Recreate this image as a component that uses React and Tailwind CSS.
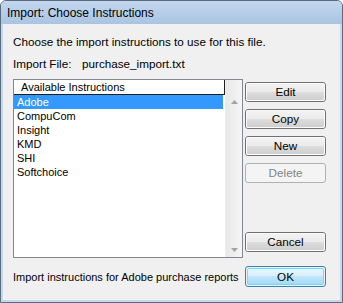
import React from 'react';

const items = ['Adobe', 'CompuCom', 'Insight', 'KMD', 'SHI', 'Softchoice'];

const Button = ({ children, disabled, primary, className = '' }) => {
  if (disabled) {
    return (
      <div className={`h-[20px] rounded-[3px] border border-[#adb2b5] bg-[#f4f4f4] flex items-center justify-center text-[#838383] ${className}`}>
        {children}
      </div>
    );
  }
  if (primary) {
    return (
      <div className={`h-[21px] rounded-[3px] border border-[#3c7fb1] p-px ${className}`}>
        <div className="h-full rounded-[2px] border border-[#6fdcf7] bg-[linear-gradient(#e5f4fc_0%,#d9f0fc_45%,#bee6fd_50%,#a7d9f5_100%)] flex items-center justify-center text-black">
          {children}
        </div>
      </div>
    );
  }
  return (
    <div className={`h-[20px] rounded-[3px] border border-[#707070] ${className}`}>
      <div className="h-full rounded-[2px] border border-[#fcfcfc] bg-[linear-gradient(#f2f2f2_0%,#ebebeb_50%,#dddddd_51%,#cfcfcf_100%)] flex items-center justify-center text-black">
        {children}
      </div>
    </div>
  );
};

export default function App() {
  return (
    <div className="w-[343px] h-[303px] bg-white font-['Liberation_Sans',Arial,sans-serif] text-[11.7px] leading-[14px] text-black">
      <div className="h-full flex flex-col rounded-t-[6px] border border-[#5b6b7d] bg-[#c4d8ee] overflow-hidden">
        {/* title bar */}
        <div className="h-[23px] flex items-center pl-[6px] bg-[linear-gradient(#c2d7ee,#a9c4e2)] text-[12px] text-black">
          Import: Choose Instructions
        </div>

        {/* client */}
        <div className="flex-1 mx-[2px] mb-[2px] bg-[#f0f0f0] pl-[10px] pr-[14px] pt-[11px] flex flex-col">
          <p>Choose the import instructions to use for this file.</p>
          <div className="flex mt-[8px]">
            <span className="w-[69px]">Import File:</span>
            <span>purchase_import.txt</span>
          </div>

          <div className="flex mt-[8px] gap-[2px]">
            {/* list box */}
            <div className="w-[230px] h-[179px] border border-[#828790] bg-white flex text-[11px]">
              <div className="flex-1 flex flex-col">
                <div className="h-[15px] flex border-b border-[#1e1e1e]">
                  <div className="w-[211px] border-r border-[#1e1e1e] pl-[7px] leading-[14px]">Available Instructions</div>
                  <div className="flex-1" />
                </div>
                <div className="flex flex-col pr-[2px]">
                  {items.map((it, i) => (
                    <div
                      key={it}
                      className={`h-[14px] pl-[3px] leading-[14px] ${i === 0 ? 'bg-[#3399ff] text-white' : ''}`}
                    >
                      {it}
                    </div>
                  ))}
                </div>
              </div>
              {/* scrollbar */}
              <div className="w-[17px] bg-[linear-gradient(90deg,#e8e8e8,#f5f5f5)] border-l border-[#ededed] flex flex-col justify-between items-center pt-[20px] pb-[5px]">
                <svg width="7" height="4" viewBox="0 0 7 4"><path d="M3.5 0L7 4H0z" fill="#a3a3a3" /></svg>
                <svg width="7" height="4" viewBox="0 0 7 4"><path d="M0 0H7L3.5 4z" fill="#a3a3a3" /></svg>
              </div>
            </div>

            {/* buttons */}
            <div className="w-[81px] flex flex-col pt-[3px]">
              <Button>Edit</Button>
              <Button className="mt-[7px]">Copy</Button>
              <Button className="mt-[7px]">New</Button>
              <Button className="mt-[7px]" disabled>Delete</Button>
              <Button className="mt-auto mb-[6px]">Cancel</Button>
            </div>
          </div>

          <div className="flex items-center justify-between mt-[8px]">
            <span className="whitespace-nowrap text-[11px]">Import instructions for Adobe purchase reports</span>
            <Button primary className="w-[81px] shrink-0">OK</Button>
          </div>
        </div>
      </div>
    </div>
  );
}
